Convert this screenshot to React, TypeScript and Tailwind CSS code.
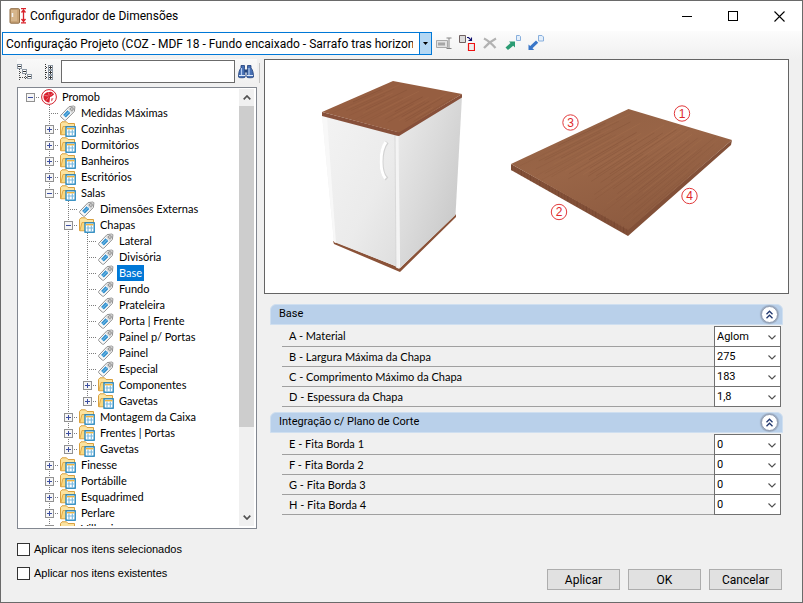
import React, { useState } from 'react';

type Kind = 'root' | 'tag' | 'folder';
type Row = { label: string; depth: number; kind: Kind; box?: '+' | '-'; last?: boolean };

const rows: Row[] = [
  { label: 'Promob', depth: 0, kind: 'root', box: '-', last: true },
  { label: 'Medidas Máximas', depth: 1, kind: 'tag' },
  { label: 'Cozinhas', depth: 1, kind: 'folder', box: '+' },
  { label: 'Dormitórios', depth: 1, kind: 'folder', box: '+' },
  { label: 'Banheiros', depth: 1, kind: 'folder', box: '+' },
  { label: 'Escritórios', depth: 1, kind: 'folder', box: '+' },
  { label: 'Salas', depth: 1, kind: 'folder', box: '-' },
  { label: 'Dimensões Externas', depth: 2, kind: 'tag' },
  { label: 'Chapas', depth: 2, kind: 'folder', box: '-' },
  { label: 'Lateral', depth: 3, kind: 'tag' },
  { label: 'Divisória', depth: 3, kind: 'tag' },
  { label: 'Base', depth: 3, kind: 'tag' },
  { label: 'Fundo', depth: 3, kind: 'tag' },
  { label: 'Prateleira', depth: 3, kind: 'tag' },
  { label: 'Porta | Frente', depth: 3, kind: 'tag' },
  { label: 'Painel p/ Portas', depth: 3, kind: 'tag' },
  { label: 'Painel', depth: 3, kind: 'tag' },
  { label: 'Especial', depth: 3, kind: 'tag' },
  { label: 'Componentes', depth: 3, kind: 'folder', box: '+' },
  { label: 'Gavetas', depth: 3, kind: 'folder', box: '+', last: true },
  { label: 'Montagem da Caixa', depth: 2, kind: 'folder', box: '+' },
  { label: 'Frentes | Portas', depth: 2, kind: 'folder', box: '+' },
  { label: 'Gavetas', depth: 2, kind: 'folder', box: '+', last: true },
  { label: 'Finesse', depth: 1, kind: 'folder', box: '+' },
  { label: 'Portábille', depth: 1, kind: 'folder', box: '+' },
  { label: 'Esquadrimed', depth: 1, kind: 'folder', box: '+' },
  { label: 'Perlare', depth: 1, kind: 'folder', box: '+' },
  { label: 'Villamis', depth: 1, kind: 'folder', box: '+' },
];

const groups = [
  {
    title: 'Base',
    fields: [
      { label: 'A - Material', value: 'Aglom' },
      { label: 'B - Largura Máxima da Chapa', value: '275' },
      { label: 'C - Comprimento Máximo da Chapa', value: '183' },
      { label: 'D - Espessura da Chapa', value: '1,8' },
    ],
  },
  {
    title: 'Integração c/ Plano de Corte',
    fields: [
      { label: 'E - Fita Borda 1', value: '0' },
      { label: 'F - Fita Borda 2', value: '0' },
      { label: 'G - Fita Borda 3', value: '0' },
      { label: 'H - Fita Borda 4', value: '0' },
    ],
  },
];

function Guide({ d }: { d: string }) {
  return (
    <svg className="h-4 w-[19px] shrink-0" viewBox="0 0 19 16" aria-hidden="true">
      <path d={d} fill="none" stroke="#7d7d7d" strokeDasharray="1 1" shapeRendering="crispEdges" />
    </svg>
  );
}

function Expander({ sign, depth }: { sign: '+' | '-'; depth: number }) {
  return (
    <button type="button" aria-label={sign === '+' ? 'Expandir' : 'Recolher'} className="h-4 w-[19px] shrink-0">
      <svg className="h-4 w-[19px]" viewBox="0 0 19 16" shapeRendering="crispEdges">
        <path d={(depth === 0 ? '' : 'M9.5 0V16') + 'M9 8.5H19'} fill="none" stroke="#7d7d7d" strokeDasharray="1 1" />
        <rect x="5.500" y="4.500" width="8" height="8" fill="#f6f6f6" stroke="#919191" />
        <path d={sign === '+' ? 'M7 8.500H12M9.500 6V11' : 'M7 8.500H12'} stroke="#3c4ea0" />
      </svg>
    </button>
  );
}

function LastExpander() {
  return (
    <button type="button" aria-label="Expandir" className="h-4 w-[19px] shrink-0">
      <svg className="h-4 w-[19px]" viewBox="0 0 19 16" shapeRendering="crispEdges">
        <path d="M9.500 0V5M9 8.500H19" fill="none" stroke="#7d7d7d" strokeDasharray="1 1" />
        <rect x="5.500" y="4.500" width="8" height="8" fill="#f6f6f6" stroke="#919191" />
        <path d="M7 8.500H12M9.500 6V11" stroke="#3c4ea0" />
      </svg>
    </button>
  );
}

function NodeIcon({ kind }: { kind: Kind }) {
  if (kind === 'root')
    return (
      <svg className="h-4 w-[19px] shrink-0" viewBox="0 0 19 16">
        <circle cx="9" cy="8" r="7.400" fill="#fff" stroke="#d4202c" strokeWidth="1" />
        <path d="M9.500 3c2-.5 3.500.5 4.500 2.500L11.500 7.500 10 8l-.5 5.500C6 13.500 3.500 11 3.500 8S6 3 9.500 3z" fill="#d81e2c" />
        <path d="M11 9.500l2.500-.5-1 2.500-1.500 1z" fill="#e67a80" />
        <path d="M4.500 6.500l4 .5M8.500 3.500l.7 3M10.500 6l2-1.500M6 11.500l2.500-3" stroke="#f0a5aa" strokeWidth=".7" />
      </svg>
    );
  if (kind === 'tag')
    return (
      <svg className="h-4 w-[19px] shrink-0" viewBox="0 0 19 16">
        <path d="M1.900 10.200L10.100 1.600l5-.6.800.8-.5 4.600-8.300 8.500c-.6.600-1.300.6-1.900 0l-3.300-3c-.5-.5-.5-1.200 0-1.700z" fill="#fafafa" stroke="#8f8f8f" />
        <path d="M10.700 2.200l4.500-.6-.5 4.500-1.900 1.800L9 4.100z" fill="#cfcfcf" />
        <circle cx="12.900" cy="4" r="1.300" fill="#fff" stroke="#7a7a7a" strokeWidth=".9" />
        <path d="M4.100 10l4.400-4.700 2.900 2.800-4.500 4.500z" fill="#2f8fce" />
        <path d="M5.600 11l4.700-4.700" stroke="#8cc8ec" />
      </svg>
    );
  return (
    <svg className="h-4 w-[19px] shrink-0" viewBox="0 0 19 16">
      <path d="M1.500 13.500V2.500L3 .8h4.500L9 2.500h6.500v9z" fill="#fbe3a0" stroke="#d9a03e" />
      <path d="M1.800 13.800L4 5.500h11.500l-2 8.300z" fill="#fad77f" stroke="#d9a03e" strokeWidth=".8" />
      <rect x="7" y="5.800" width="9.200" height="9.400" fill="#fff" stroke="#1b80ba" strokeWidth="1.300" />
      <path d="M8 7.700h7.500" stroke="#f1b43c" strokeWidth="1.400" />
      <path d="M8.500 11h6.500M10 8.500v6M13.300 8.500v6" stroke="#77b9e0" strokeWidth="1.100" />
    </svg>
  );
}

function TreeRow({ row, selected, onSelect }: { row: Row; selected: boolean; onSelect: () => void }) {
  const guides: React.ReactNode[] = [];
  for (let i = 0; i < row.depth; i++) {
    guides.push(<Guide key={i} d={i === 0 ? '' : 'M9.5 0V16'} />);
  }
  return (
    <li role="treeitem" aria-selected={selected} className="flex h-4 items-center">
      {guides}
      {row.box ? (
        row.last && row.depth > 0 ? <LastExpander /> : <Expander sign={row.box} depth={row.depth} />
      ) : (
        <Guide d="M9.500 0V16M9 8.500H19" />
      )}
      <NodeIcon kind={row.kind} />
      <button
        type="button"
        onClick={onSelect}
        className={'ml-px h-4 px-0.5 text-left leading-4 whitespace-nowrap ' + (selected ? 'bg-[#0078d7] text-white' : '')}
      >
        {row.label}
      </button>
    </li>
  );
}

function ToolButton({ label, children }: { label: string; children: React.ReactNode }) {
  return (
    <button type="button" aria-label={label} className="flex h-[22px] w-[23px] shrink-0 items-center justify-center">
      <svg className="size-4" viewBox="0 0 16 16">
        {children}
      </svg>
    </button>
  );
}

type Pt = [number, number];
const mix = (a: Pt, b: Pt, t: number): Pt => [a[0] + (b[0] - a[0]) * t, a[1] + (b[1] - a[1]) * t];

/* Wood grain: strokes running from edge a-b to edge c-d of a board. */
function Grain({ a, b, c, d, count }: { a: Pt; b: Pt; c: Pt; d: Pt; count: number }) {
  return (
    <g>
      {Array.from({ length: count }, (_, i) => {
        const t = (i + 0.5) / count;
        const p = mix(a, b, t);
        const q = mix(c, d, t);
        const r = Math.abs(Math.sin(i * 12.9898) * 43758.5453) % 1;
        const s = mix(p, q, r * 0.4);
        const e = mix(p, q, 0.6 + ((r * 7) % 1) * 0.4);
        return (
          <line key={i} x1={s[0]} y1={s[1]} x2={e[0]} y2={e[1]} stroke={i % 3 ? '#70412a' : '#b07852'} strokeOpacity={0.08 + r * 0.2} />
        );
      })}
    </g>
  );
}

function Mark({ x, y, n }: { x: number; y: number; n: number }) {
  return (
    <g>
      <circle cx={x} cy={y} r="7.700" fill="#fff" stroke="#e23a3c" />
      <text x={x} y={y + 4} textAnchor="middle" fontSize="12" fill="#e0282c" className="font-['Liberation_Sans',Arial,sans-serif]">
        {n}
      </text>
    </g>
  );
}

function Preview() {
  return (
    <svg className="h-[233px] w-full" viewBox="265 60 523 233" role="img" aria-label="Base">
      <defs>
        <linearGradient id="door" x1="0" y1="0" x2="1" y2="1">
          <stop offset="0" stopColor="#f3f3f3" />
          <stop offset=".6" stopColor="#ebebeb" />
          <stop offset="1" stopColor="#dedede" />
        </linearGradient>
        <linearGradient id="side" x1="0" y1="0" x2="1" y2=".9">
          <stop offset="0" stopColor="#ececec" />
          <stop offset=".5" stopColor="#d9d9d9" />
          <stop offset="1" stopColor="#c4c4c4" />
        </linearGradient>
        <linearGradient id="wood" x1="0" y1="0" x2=".6" y2="1">
          <stop offset="0" stopColor="#915f42" />
          <stop offset=".5" stopColor="#996547" />
          <stop offset="1" stopColor="#8c5a3f" />
        </linearGradient>
      </defs>
      <path d="M333 241l67 27 56-54v3l-56 55-66-28z" fill="#8a5238" />
      <path d="M322 115l75 18 1 134-64-25z" fill="url(#door)" />
      <path d="M322 115l5 2 9 126-2-1z" fill="#f8f8f8" />
      <path d="M395 134l4 1 .5 134-3.500-1.500z" fill="#f4f4f4" />
      <path d="M395 134l1 133" stroke="#d0d0d0" strokeWidth=".7" />
      <path d="M398.500 134L462 96l-6.500 119-55.500 53z" fill="url(#side)" />
      <path d="M322 112l76 20 64-38v3.500l-63 38.500-2-.3-75-19.700z" fill="#87503a" />
      <path d="M393 81l69 13-63 38.500L322 112z" fill="#965e41" />
      <Grain a={[323, 112]} b={[398, 132]} c={[393, 82]} d={[461, 94]} count={26} />
      <path d="M387 142c-4 5-5.500 13-5.500 20 0 7 2 14 5.500 17" fill="none" stroke="#d2d2d2" strokeWidth="4" />
      <path d="M386 142c-4 5-5 13-5 20 0 7 1.500 13 4.500 16.500" fill="none" stroke="#fff" strokeWidth="3" />

      <path d="M511 164l117 65 104-89-1 5-103 91-117-66z" fill="#825038" />
      <path d="M628.500 109L732 140l-104 90-117-66z" fill="url(#wood)" />
      <Grain a={[512, 164]} b={[628, 229]} c={[628, 110]} d={[731, 140]} count={54} />
      {Array.from({ length: 38 }, (_, i) => (
        <line key={i} x1={512 + i * 3.1} x2={512 + i * 3.1} y1={165 + i * 1.71} y2={171 + i * 1.71} stroke="#5f3522" strokeOpacity={i % 3 ? 0.12 : 0.3} />
      ))}
      <Mark x={682} y={113.500} n={1} />
      <Mark x={559} y={212} n={2} />
      <Mark x={570.500} y={122.500} n={3} />
      <Mark x={689.500} y={196} n={4} />
    </svg>
  );
}

export default function App() {
  const [selected, setSelected] = useState('Base');

  return (
    <div className="flex min-h-screen flex-col border border-[#6a6a6a] bg-[#f0f0f0] font-[Roboto,sans-serif] text-[11px] text-black">
      <header className="flex h-[30px] items-center bg-white pl-2">
        <svg className="h-4 w-[18px]" viewBox="0 0 18 16">
          <rect x="1" y=".7" width="9.500" height="14.500" rx="1" fill="#c9a477" stroke="#8e6c45" />
          <rect x="2" y="2" width="6" height="11" fill="#dfc19a" opacity=".6" />
          <path d="M3.500 5v4" stroke="#f3f3f3" strokeWidth="1.500" />
          <path d="M12 .7h5M12 14.800h5M14.500 2v12M12.500 4.500l2-2.500 2 2.500M12.500 11l2 2.500 2-2.500" fill="none" stroke="#d9222a" strokeWidth="1.300" />
        </svg>
        <h1 className="ml-[3px] flex-1 text-[12px] leading-4">Configurador de Dimensões</h1>
        <button type="button" aria-label="Minimizar" className="flex h-full w-[46px] items-center justify-center">
          <svg className="size-[11px]" viewBox="0 0 11 11"><path d="M0 5.500h10" stroke="#000" /></svg>
        </button>
        <button type="button" aria-label="Maximizar" className="flex h-full w-[46px] items-center justify-center">
          <svg className="size-[11px]" viewBox="0 0 11 11"><rect x=".5" y=".5" width="9" height="9" fill="none" stroke="#000" /></svg>
        </button>
        <button type="button" aria-label="Fechar" className="flex h-full w-[46px] items-center justify-center">
          <svg className="size-[11px]" viewBox="0 0 11 11"><path d="M.5.5l10 10M10.500.5l-10 10" stroke="#000" strokeWidth="1.100" /></svg>
        </button>
      </header>

      <div className="flex h-7 items-start bg-gradient-to-b from-[#fcfcfc] to-[#f0f0f0] pt-px pl-px">
        <div className="flex h-[23px] w-[430px] border border-[#0078d7] bg-white">
          <select
            aria-label="Configuração"
            className="w-[416px] appearance-none overflow-hidden pr-1.5 pl-[3px] text-[12px] outline-none"
          >
            <option>Configuração Projeto (COZ - MDF 18 - Fundo encaixado - Sarrafo tras horizontal</option>
          </select>
          <span className="flex w-3 items-center justify-center border-l border-[#0078d7] bg-[#b3d7f3]">
            <svg className="h-[3px] w-[5px]" viewBox="0 0 5 3"><path d="M0 0h5L2.500 3z" /></svg>
          </span>
        </div>
        <div className="flex">
          <ToolButton label="Renomear">
            <path d="M.5 5.500h11v7H.5z" fill="#e2e2e2" stroke="#a9a9a9" />
            <path d="M2 7.500h7v3H2z" fill="#a6a6a6" />
            <path d="M10.500 3h5M10.500 13.500h5M13 3v10.500" stroke="#858585" />
          </ToolButton>
          <ToolButton label="Duplicar">
            <path d="M.5.500h6v7h-6z" fill="#dcdcdc" stroke="#6f6161" />
            <path d="M9.500 8.500h6v7h-6z" fill="#eee" stroke="#ee1212" strokeWidth="1.200" />
            <path d="M8 2.500h1.500l3 3M12.500 2.500v3H9.500" fill="none" stroke="#10106e" strokeWidth="1.100" />
          </ToolButton>
          <ToolButton label="Excluir">
            <path d="M2 3.500c4 2 8 5.500 11.500 9.500M14 3.500C9 6 5 9.500 2 13" stroke="#b2b2b2" strokeWidth="2.200" fill="none" />
          </ToolButton>
          <ToolButton label="Exportar">
            <path d="M11.500.500h3l1 1v4h-4z" fill="#e4effb" stroke="#88afdc" />
            <path d="M.5 12.500l5-4.500-1.500-1.500h6v6L8.200 10.700 3 15z" fill="#2b9c73" />
          </ToolButton>
          <ToolButton label="Importar">
            <path d="M10.500.500h3.500l1.500 1.500v4h-5z" fill="#e4effb" stroke="#88afdc" />
            <path d="M.5 15V9.500l1.700 1.500L8 5.500l2.200 2.200-5.700 5.600L6.200 15z" fill="#3976c8" />
          </ToolButton>
        </div>
      </div>

      <main className="flex flex-1 pr-[13px] pl-4">
        <aside className="flex w-[240px] shrink-0 flex-col">
          <div className="flex h-[25px] items-center bg-gradient-to-b from-[#f9f9f9] to-[#f0f0f0]">
            <button type="button" aria-label="Recolher tudo" className="flex w-4 justify-center">
              <svg className="size-4" viewBox="0 0 16 16" shapeRendering="crispEdges">
                <path d="M2.500 5v11M3 8.500h4M8.500 10v6M3 13.500h8" fill="none" stroke="#4b4b4b" strokeDasharray="1 1" />
                <path d="M.5.5h4v4h-4zM5.500 5.500h4v4h-4zM10.500 10.500h4v4h-4z" fill="#fff" stroke="#8d98a4" />
                <path d="M1 2.500h3M6 7.500h3M11 12.500h3" stroke="#333" />
              </svg>
            </button>
            <button type="button" aria-label="Expandir tudo" className="ml-[7px] flex w-[19px] justify-center">
              <svg className="size-4" viewBox="0 0 16 16" shapeRendering="crispEdges">
                <path d="M3.500 0v16M4 3.500h3M4 8.500h3M4 13.500h3" fill="none" stroke="#333" strokeDasharray="1 1" />
                <path d="M6.500 1.500h4v4h-4zM6.500 6.500h4v4h-4zM6.500 11.500h4v4h-4z" fill="#fff" stroke="#8d98a4" />
                <path d="M7 3.500h3M7 8.500h3M7 13.500h3M8.500 2v3M8.500 7v3M8.500 12v3" stroke="#333" />
              </svg>
            </button>
            <input aria-label="Pesquisar" className="ml-0.5 h-[23px] min-w-0 flex-1 border border-[#6b6b6b] bg-white px-1 outline-none" />
            <button type="button" aria-label="Localizar" className="flex w-[22px] justify-center">
              <svg className="size-4" viewBox="0 0 16 16">
                <path d="M3 1.500h3.500v3L7.200 13c0 1-6.700 1-6.700 0 0-4 .8-7.500 2.500-9zM9.500 1.500H13v2.500c1.700 1.500 2.500 5 2.500 9 0 1-6.700 1-6.700 0l.7-8.500z" fill="#4770b4" stroke="#1e3d78" strokeWidth=".8" />
                <path d="M6.500 5.500h3v3h-3z" fill="#24467f" />
                <path d="M3.500 4v7M11 4v7" stroke="#b5cdef" strokeWidth="1.200" />
                <path d="M1 11.500h6M9 11.500h6" stroke="#dce8fa" />
              </svg>
            </button>
          </div>

          <div className="mt-[3px] flex h-[442px] border border-[#828790] bg-white pt-px pr-0.5 pb-0.5">
            <ul role="tree" aria-label="Itens" className="flex-1 overflow-hidden pl-[3px] font-[Lato,sans-serif]">
              {rows.map((row, i) => (
                <TreeRow key={i} row={row} selected={row.label === selected} onSelect={() => setSelected(row.label)} />
              ))}
            </ul>
            <div className="flex w-[15px] flex-col bg-[#f0f0f0]">
              <button type="button" aria-label="Rolar para cima" className="flex h-[17px] items-center justify-center">
                <svg className="h-[5px] w-2" viewBox="0 0 8 5"><path d="M.7 4.300L4 1l3.300 3.300" fill="none" stroke="#505050" strokeWidth="1.700" /></svg>
              </button>
              <span className="h-[321px] bg-[#cdcdcd]" />
              <button type="button" aria-label="Rolar para baixo" className="mt-auto flex h-[17px] items-center justify-center">
                <svg className="h-[5px] w-2" viewBox="0 0 8 5"><path d="M.7.700L4 4 7.300.700" fill="none" stroke="#505050" strokeWidth="1.700" /></svg>
              </button>
            </div>
          </div>

          <div className="mt-3 flex flex-col gap-2 pb-3 font-['Liberation_Sans',Arial,sans-serif]">
            {['Aplicar nos itens selecionados', 'Aplicar nos itens existentes'].map((t) => (
              <label key={t} className="flex h-4 items-center gap-1">
                <input type="checkbox" className="size-[13px] appearance-none border border-[#333] bg-white checked:bg-[#0078d7]" />
                {t}
              </label>
            ))}
          </div>
        </aside>

        <section className="flex min-w-0 flex-1">
          <div className="mt-1 mr-1 ml-0.5 h-5 w-px shrink-0 bg-[#c4c4c4]" />
          <div className="flex min-w-0 flex-1 flex-col">
            <div className="border border-[#646464] bg-white">
              <Preview />
            </div>
            <div className="mt-2.5 flex flex-col gap-[5px] pr-1.5 pl-1.5">
              {groups.map((g, gi) => (
                <fieldset key={g.title} className="min-w-0">
                  <div className="mb-px flex h-[21px] items-center justify-between rounded-t-md border border-[#cfdff0] bg-[#b9d0ea] pr-1 pl-2">
                    <h2>{g.title}</h2>
                    <button type="button" aria-label={'Recolher ' + g.title} className="flex size-[17px] items-center justify-center rounded-full border border-[#8e9bb2] bg-white shadow-[0_0_1px_1px_#9aa9bd]">
                      <svg className="h-[9px] w-[9px]" viewBox="0 0 9 9"><path d="M1.500 4.200l3-3 3 3M1.500 8.200l3-3 3 3" fill="none" stroke="#22386f" strokeWidth="1.300" /></svg>
                    </button>
                  </div>
                  <div className="pr-0.5 pl-3">
                    {g.fields.map((f, i) => {
                      const id = 'f' + gi + i;
                      return (
                        <div key={id} className={'flex ' + (i === 0 ? 'h-[21px]' : 'h-5')}>
                          <label htmlFor={id} className="flex flex-1 items-center border-b border-[#a0a0a0] pt-px pl-[7px] font-[Lato,sans-serif]">
                            {f.label}
                          </label>
                          <span className={'relative flex w-[67px] border-x border-b border-[#707070] bg-white ' + (i === 0 ? 'border-t' : '')}>
                            <select id={id} className="w-full appearance-none pl-0.5 leading-4 outline-none">
                              <option>{f.value}</option>
                            </select>
                            <svg className="pointer-events-none absolute top-2 right-1 h-[5px] w-2" viewBox="0 0 8 5"><path d="M.5.500L4 4 7.500.500" fill="none" stroke="#505050" strokeWidth="1.100" /></svg>
                          </span>
                        </div>
                      );
                    })}
                  </div>
                </fieldset>
              ))}
            </div>
            <footer className="mt-auto mb-3 flex justify-end gap-2 pr-[7px]">
              {['Aplicar', 'OK', 'Cancelar'].map((t) => (
                <button key={t} type="button" className="h-[21px] w-[73px] border border-[#adadad] bg-[#e1e1e1] text-[12px] leading-4">
                  {t}
                </button>
              ))}
            </footer>
          </div>
        </section>
      </main>
    </div>
  );
}
